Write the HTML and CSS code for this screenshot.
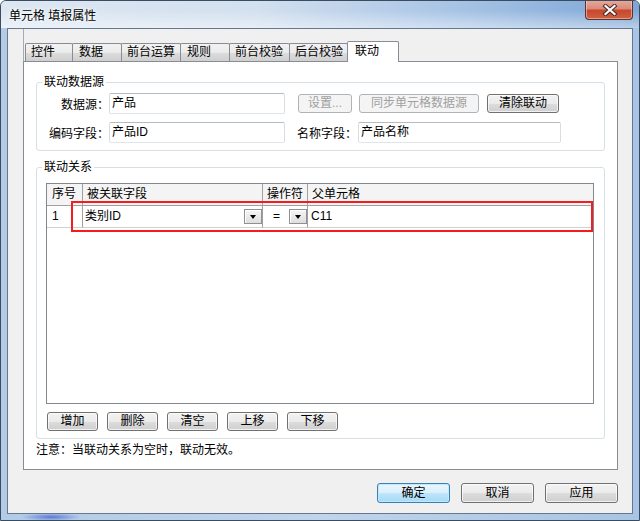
FILE: index.html
```html
<!DOCTYPE html>
<html lang="zh-CN">
<head>
<meta charset="utf-8">
<title>单元格 填报属性</title>
<link rel="stylesheet" href="styles.css">
</head>
<body>
<div class="window">
  <div class="titlebar">
    <span class="title">单元格 填报属性</span>
    <div class="close">
      <svg width="16" height="12" viewBox="0 0 16 12">
        <path d="M3.5 2 L12.5 10 M12.5 2 L3.5 10" stroke="#4a2a26" stroke-width="4.2" stroke-linecap="square" fill="none"/>
        <path d="M3.5 2 L12.5 10 M12.5 2 L3.5 10" stroke="#ffffff" stroke-width="2.2" stroke-linecap="square" fill="none"/>
      </svg>
    </div>
  </div>
  <div class="client">
    <div class="tabctl">
      <div class="tabs">
        <div class="tab t1">控件</div>
        <div class="tab t2">数据</div>
        <div class="tab t3">前台运算</div>
        <div class="tab t4">规则</div>
        <div class="tab t5">前台校验</div>
        <div class="tab t6">后台校验</div>
        <div class="tab active t7">联动</div>
      </div>
      <div class="panel">
        <fieldset class="group g1">
          <legend>联动数据源</legend>
          <div class="rows">
            <div class="row">
              <span class="lbl">数据源：</span>
              <div class="input w176">产品</div>
              <button class="btn btn-set" disabled>设置...</button>
              <button class="btn btn-sync" disabled>同步单元格数据源</button>
              <button class="btn btn-clear">清除联动</button>
            </div>
            <div class="row">
              <span class="lbl">编码字段：</span>
              <div class="input w176">产品ID</div>
              <span class="lbl2">名称字段：</span>
              <div class="input w203">产品名称</div>
            </div>
          </div>
        </fieldset>
        <fieldset class="group g2">
          <legend>联动关系</legend>
          <div class="table">
            <div class="tr">
              <div class="th c1">序号</div>
              <div class="th">被关联字段</div>
              <div class="th">操作符</div>
              <div class="th">父单元格</div>
            </div>
            <div class="tr">
              <div class="td c1">1</div>
              <div class="td combo"><span class="val">类别ID</span><span class="dd"></span></div>
              <div class="td combo"><span class="val op">=</span><span class="dd"></span></div>
              <div class="td c4">C11</div>
            </div>
            <div class="mark"></div>
          </div>
          <div class="btnrow">
            <button class="btn">增加</button>
            <button class="btn">删除</button>
            <button class="btn">清空</button>
            <button class="btn">上移</button>
            <button class="btn">下移</button>
          </div>
        </fieldset>
        <div class="note">注意：当联动关系为空时，联动无效。</div>
      </div>
    </div>
    <div class="footer">
      <button class="btn default">确定</button>
      <button class="btn">取消</button>
      <button class="btn">应用</button>
    </div>
  </div>
</div>
</body>
</html>
```
FILE: styles.css
```css
* { box-sizing: border-box; }

body {
  margin: 0;
  background: #ffffff;
  font-family: "Liberation Sans", "Noto Sans CJK SC", sans-serif;
  font-size: 12px;
  color: #000;
}

.window {
  width: 640px;
  height: 521px;
  border: 1px solid #3a4c60;
  border-radius: 6px 6px 0 0;
  padding: 0 6px 6px;
  display: flex;
  flex-direction: column;
  overflow: hidden;
  background:
    radial-gradient(30px 4px at 50px 516px, rgba(70, 100, 210, 0.8), rgba(70, 100, 210, 0)),
    linear-gradient(90deg, #b3cbe7 0%, #c0d4eb 50%, #a9c4e4 100%);
}

.titlebar {
  height: 27px;
  margin: 0 -6px;
  padding: 0 6px 0 7px;
  position: relative;
  display: flex;
  align-items: center;
  background:
    linear-gradient(180deg, rgba(255, 255, 255, 0) 0%, rgba(255, 255, 255, 0) 35%, rgba(255, 255, 255, 0.45) 100%),
    linear-gradient(90deg, #dde7f2 0%, #d3e0ef 40%, #a9c5e6 70%, #7ea6d6 100%);
}

.title {
  padding-left: 1px;
  text-shadow: 0 0 5px #ffffff, 0 0 3px #ffffff;
}

.close {
  position: absolute;
  top: -1px;
  right: 6px;
  width: 48px;
  height: 20px;
  border: 1px solid #5a3530;
  border-top: none;
  border-radius: 0 0 4px 4px;
  background: linear-gradient(180deg, #e8ab9c 0%, #dc8a78 45%, #c7472f 55%, #d0603f 100%);
  box-shadow: inset 0 0 0 1px rgba(255, 220, 210, 0.5);
  display: flex;
  align-items: center;
  justify-content: center;
  padding-left: 2px;
}

.client {
  height: 486px;
  border: 1px solid #65788d;
  background: #f0f0f0;
  display: flex;
  flex-direction: column;
}

.tabctl {
  margin-left: 15px;
  margin-right: 14px;
  border-left: 1px solid #a8abb2;
  padding-top: 12px;
}

.tabs {
  display: flex;
  align-items: flex-end;
  height: 20px;
  padding-left: 1px;
}

.tab {
  height: 18px;
  margin-right: -1px;
  border: 1px solid #898c95;
  border-bottom: none;
  border-radius: 2px 2px 0 0;
  padding: 0 0 0 5px;
  line-height: 16px;
  white-space: nowrap;
  background: linear-gradient(180deg, #f2f2f2 0%, #ebebeb 50%, #dddddd 50%, #cfcfcf 100%);
}

.t1 { width: 48px; }
.t2 { width: 50px; padding-left: 6px; }
.t3 { width: 60px; }
.t4 { width: 50px; padding-left: 6px; }
.t5 { width: 61px; }
.t6 { width: 59px; }

.tab.active {
  width: 52px;
  height: 21px;
  margin-bottom: -1px;
  padding-left: 7px;
  line-height: 18px;
  background: #ffffff;
  position: relative;
  z-index: 1;
}

.panel {
  width: 595px;
  height: 409px;
  margin-left: -1px;
  border: 1px solid #898c95;
  background: #ffffff;
  display: flex;
  flex-direction: column;
}

.group {
  margin: 0 12px;
  padding: 0;
  min-width: 0;
  border: 1px solid #d5dfe5;
  border-radius: 3px;
}

.group legend {
  margin-left: 5px;
  padding: 0 2px;
  height: 16px;
  line-height: 16px;
}

.g1 { margin-top: 12px; }
.g2 { margin-top: 8px; }

.rows {
  padding: 3px 0 7px;
  display: flex;
  flex-direction: column;
  gap: 8px;
}

.row {
  display: flex;
  align-items: center;
  height: 21px;
}

.lbl {
  width: 72px;
  text-align: right;
  white-space: nowrap;
}

.lbl2 {
  width: 61px;
  margin-left: 12px;
  white-space: nowrap;
}

.input {
  height: 21px;
  border: 1px solid;
  border-color: #b6bbc3 #d8dde4 #e0e5eb #d8dde4;
  border-radius: 2px;
  background: #ffffff;
  padding-left: 2px;
  line-height: 19px;
  white-space: nowrap;
}

.w176 { width: 176px; }
.w203 { width: 203px; }

.btn {
  height: 19px;
  padding: 0;
  font: inherit;
  color: #000;
  line-height: 17px;
  text-align: center;
  white-space: nowrap;
  border: 1px solid #707070;
  border-radius: 3px;
  background: linear-gradient(180deg, #f2f2f2 0%, #ebebeb 50%, #dddddd 50%, #cfcfcf 100%);
  box-shadow: inset 0 0 0 1px rgba(255, 255, 255, 0.7);
}

.btn:disabled {
  color: #a0a0a0;
  border-color: #b0b3b6;
  background: #f4f4f4;
  box-shadow: none;
}

.btn-set { width: 54px; margin-left: 13px; }
.btn-sync { width: 120px; margin-left: 7px; }
.btn-clear { width: 72px; margin-left: 8px; }

.table {
  margin: 8px 0 0 9px;
  width: 548px;
  height: 221px;
  border: 1px solid #828790;
  background: #ffffff;
  position: relative;
}

.tr {
  display: grid;
  grid-template-columns: 36px 180px 45px 1fr;
}

.th {
  height: 22px;
  padding-left: 4px;
  line-height: 21px;
  white-space: nowrap;
  background: #f4f4f4;
  border-right: 1px solid #a0a0a0;
  border-bottom: 1px solid #a0a0a0;
}

.th:last-child { border-right: none; }
.c1 { padding-left: 5px; }

.td {
  height: 22px;
  line-height: 21px;
  display: flex;
  align-items: center;
  border-right: 1px solid #a0a0a0;
  border-bottom: 1px solid #d0d0d0;
}

.td:last-child { border-right: none; }
.td.c1 { padding-left: 5px; }
.td.c4 { padding-left: 3px; }
.combo { padding-left: 2px; }

.val { flex: 1; }
.op { text-align: center; padding-right: 1px; }

.dd {
  width: 18px;
  height: 15px;
  border: 1px solid #8f9092;
  background: linear-gradient(180deg, #f6f6f6 0%, #dedede 100%);
  box-shadow: inset 1px 1px 0 #ffffff;
  display: flex;
  align-items: center;
  justify-content: center;
}

.dd::after {
  content: "";
  border-style: solid;
  border-width: 4px 3.5px 0;
  border-color: #000 transparent transparent;
}

.mark {
  position: absolute;
  left: 24px;
  top: 17px;
  width: 522px;
  height: 31px;
  border: 2px solid #f41c1c;
}

.btnrow {
  display: flex;
  gap: 9px;
  margin: 8px 0 7px 10px;
}

.btnrow .btn { width: 51px; }

.note {
  margin: 3px 0 0 12px;
  line-height: 16px;
}

.footer {
  display: flex;
  justify-content: flex-end;
  gap: 11px;
  margin-top: 13px;
  padding-right: 14px;
}

.footer .btn {
  width: 73px;
  height: 20px;
  line-height: 18px;
}

.btn.default {
  border-color: #3c7fb1;
  background: linear-gradient(180deg, #eaf6fd 0%, #d9f0fc 50%, #bee6fd 50%, #a7d9f5 100%);
  box-shadow: inset 0 0 0 1px #bfe9ff;
}
```
